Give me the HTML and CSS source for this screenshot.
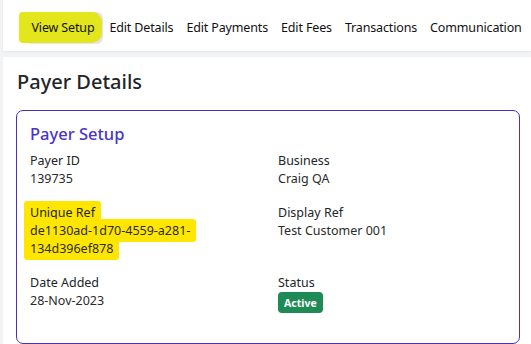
FILE: index.html
```html
<!DOCTYPE html>
<html lang="en">
<head>
    <meta charset="UTF-8">
    <meta name="viewport" content="width=device-width, initial-scale=1.0">
    <title>Payer Details</title>
    <link rel="stylesheet" href="styles.css">
</head>
<body>
    <nav class="topnav">
        <a class="tab active" href="#"><span class="mark-nav">View Setup</span></a>
        <a class="tab" href="#">Edit Details</a>
        <a class="tab" href="#">Edit Payments</a>
        <a class="tab" href="#">Edit Fees</a>
        <a class="tab" href="#">Transactions</a>
        <a class="tab" href="#">Communication</a>
    </nav>
    <main class="panel">
        <h1>Payer Details</h1>
        <section class="card">
            <h2>Payer Setup</h2>
            <div class="fields">
                <div class="field">
                    <div class="label">Payer ID</div>
                    <div class="value">139735</div>
                </div>
                <div class="field">
                    <div class="label">Business</div>
                    <div class="value">Craig QA</div>
                </div>
                <div class="field">
                    <div class="label"><span class="mark">Unique Ref</span></div>
                    <div class="value ref"><span class="mark">de1130ad-1d70-4559-a281-134d396ef878</span></div>
                </div>
                <div class="field">
                    <div class="label">Display Ref</div>
                    <div class="value">Test Customer 001</div>
                </div>
                <div class="field">
                    <div class="label">Date Added</div>
                    <div class="value">28-Nov-2023</div>
                </div>
                <div class="field">
                    <div class="label">Status</div>
                    <div class="value"><span class="badge">Active</span></div>
                </div>
            </div>
        </section>
    </main>
</body>
</html>
```

FILE: styles.css
```css
body {
    margin: 0;
    background-color: #f2f3f5;
    font-family: "Noto Sans", "Open Sans", sans-serif;
    color: #212529;
}
a {
    text-decoration: none;
    color: #111;
}
.topnav {
    margin-left: 3px;
    height: 51px;
    box-sizing: border-box;
    padding: 4px 0 0 22px;
    background-color: #fff;
    display: flex;
    align-items: center;
    box-shadow: 0 1px 2px rgba(0, 0, 0, 0.06);
    white-space: nowrap;
    overflow: hidden;
}
.tab {
    font-size: 12.5px;
    letter-spacing: -0.15px;
    line-height: 18px;
    padding: 7px 6.5px;
    border-radius: 6px;
}
.tab.active {
    background-color: #e3e3f6;
}
.mark-nav {
    background-color: #e2e61a;
    padding: 7px 8px 7px 13px;
    margin: 0 -6px 0 -13px;
    border-radius: 4px 10px 10px 4px;
}
.panel {
    margin: 6px 0 0 3px;
    background-color: #fff;
    padding: 13px 11px 2px 13px;
}
h1 {
    margin: 0 0 16px 1px;
    font-size: 20px;
    line-height: 24px;
    font-weight: 500;
}
.card {
    border: 1px solid #4a2fc2;
    border-radius: 7px;
    padding: 12px 13px 30px;
}
h2 {
    margin: 0 0 7px;
    font-size: 16.5px;
    line-height: 22px;
    font-weight: 500;
    color: #4a34c8;
}
.fields {
    display: grid;
    grid-template-columns: 1fr 1fr;
    column-gap: 20px;
    row-gap: 16px;
}
.label, .value {
    font-size: 12.5px;
    line-height: 18px;
}
.value {
    color: #2b2b2b;
}
.ref {
    max-width: 200px;
}
.mark {
    background-color: #ffe600;
    padding: 3px 6px;
    margin-left: -6px;
    -webkit-box-decoration-break: clone;
    box-decoration-break: clone;
    border-radius: 3px;
}
.badge {
    display: inline-block;
    background-color: #1e8a55;
    color: #fff;
    font-size: 10.5px;
    font-weight: 700;
    line-height: 14px;
    padding: 4px 6px 3px;
    border-radius: 4px;
}
```
